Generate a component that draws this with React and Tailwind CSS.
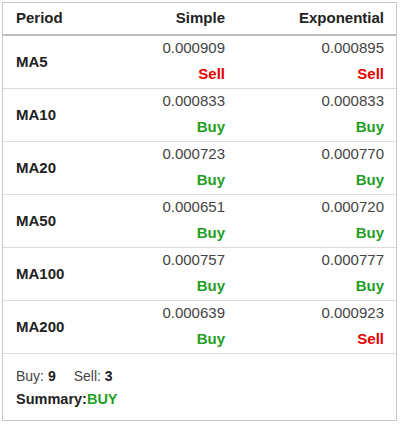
import React from "react";

const rows = [
  { period: "MA5", simple: "0.000909", sSig: "Sell", exp: "0.000895", eSig: "Sell" },
  { period: "MA10", simple: "0.000833", sSig: "Buy", exp: "0.000833", eSig: "Buy" },
  { period: "MA20", simple: "0.000723", sSig: "Buy", exp: "0.000770", eSig: "Buy" },
  { period: "MA50", simple: "0.000651", sSig: "Buy", exp: "0.000720", eSig: "Buy" },
  { period: "MA100", simple: "0.000757", sSig: "Buy", exp: "0.000777", eSig: "Buy" },
  { period: "MA200", simple: "0.000639", sSig: "Buy", exp: "0.000923", eSig: "Sell" },
];

function Signal({ value }) {
  const color = value === "Sell" ? "text-[#e60000]" : "text-[#1f9e1f]";
  return <div className={`h-5 leading-5 mt-[6px] font-bold ${color}`}>{value}</div>;
}

export default function App() {
  return (
    <div className="bg-white w-[400px] h-[424px] pt-[2px] pl-[2px] text-[14px] text-[#333]" style={{ fontFamily: '"Liberation Sans", Arial, sans-serif' }}>
      <div className="w-[395px] border border-[#c8c8c8]">
        {/* header */}
        <div className="grid grid-cols-[110px_125px_1fr] h-[33px] items-center border-b-2 border-[#bdbdbd] font-bold text-[15px] text-[#222]">
          <div className="px-[13px]">Period</div>
          <div className="pl-[12px] pr-[13px] text-right">Simple</div>
          <div className="px-[12px] text-right">Exponential</div>
        </div>

        {rows.map((r) => (
          <div key={r.period} className="grid grid-cols-[110px_125px_1fr] h-[53px] border-b border-[#dcdcdc] text-[15px]">
            <div className="px-[13px] flex items-center font-bold text-[#222]">{r.period}</div>
            <div className="pl-[12px] pr-[13px] text-right pt-[2px] text-[#444]">
              <div className="h-5 leading-5">{r.simple}</div>
              <Signal value={r.sSig} />
            </div>
            <div className="px-[12px] text-right pt-[2px] text-[#444]">
              <div className="h-5 leading-5">{r.exp}</div>
              <Signal value={r.eSig} />
            </div>
          </div>
        ))}

        {/* summary */}
        <div className="h-[66px] px-[13px] pt-[12px]">
          <div className="h-5 leading-5 text-[#444]">
            Buy: <span className="font-bold text-[#222]">9</span>
            <span className="ml-[18px]">Sell: </span>
            <span className="font-bold text-[#222]">3</span>
          </div>
          <div className="h-5 leading-5 mt-[3px] text-[14.5px] font-bold text-[#222]">
            Summary:<span className="text-[#1f9e1f]">BUY</span>
          </div>
        </div>
      </div>
    </div>
  );
}
